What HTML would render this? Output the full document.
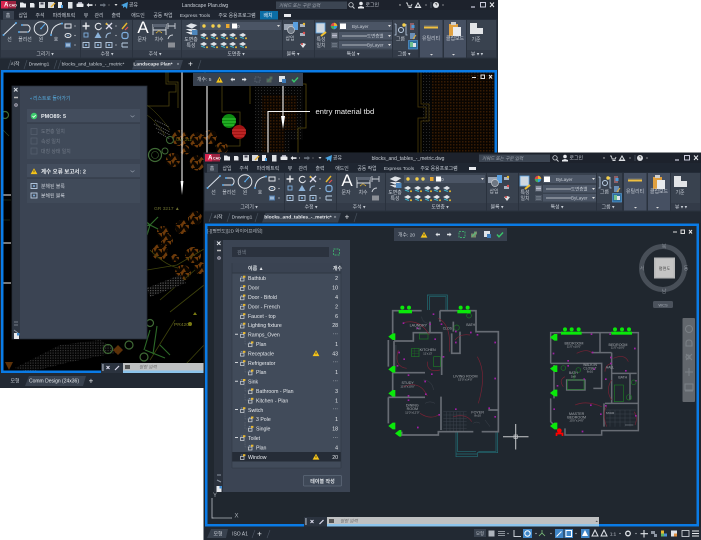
<!DOCTYPE html>
<html><head><meta charset="utf-8"><style>
html,body{margin:0;padding:0;background:#fff;width:701px;height:540px;overflow:hidden}
svg{display:block}
text{font-family:"Liberation Sans","Noto Sans CJK KR",sans-serif;font-size:4.9px;fill:#c8ced6}
.m{text-anchor:middle}.e{text-anchor:end}
.b{font-weight:bold;fill:#e4e8ec}
.w{fill:#e6e9ed;font-size:5.2px}
.d{fill:#737c89}
.t{font-size:4px;fill:#a9adb2;text-anchor:middle}
.i{fill:none;stroke:#dfe3e8;stroke-width:1}
</style></head><body>
<svg width="701" height="540" viewBox="0 0 701 540" xmlns="http://www.w3.org/2000/svg">
<defs>
<pattern id="dotO" width="3" height="3" patternUnits="userSpaceOnUse"><rect width="3" height="3" fill="#0a0501"/><rect width="1.500" height="1.500" fill="#361b04"/></pattern>
<pattern id="dotG" width="3" height="3" patternUnits="userSpaceOnUse"><rect width="3" height="3" fill="#050505"/><rect width="1" height="1" fill="#2a2a2a"/></pattern>
<pattern id="dotL" width="2.500" height="2.500" patternUnits="userSpaceOnUse"><rect width="2.500" height="2.500" fill="#080808"/><rect width="1.200" height="1.200" fill="#565656"/></pattern>
<pattern id="tri" width="9" height="8" patternUnits="userSpaceOnUse"><rect width="9" height="8" fill="#0a0500"/><path d="M0 0H4L2 4ZM5 1H9V5ZM1 8L4 4 6 8Z" fill="#6f3b0a"/></pattern>
<g id="warn"><path d="M0-3.200L3.400 2.600H-3.400Z" fill="#f6c51a"/><path d="M-.35-1.200h.7v2h-.7z" fill="#222"/></g>
<g id="blk"><rect x="-2.500" y="-.5" width="3.500" height="3" fill="none" stroke="#d6dade" stroke-width=".7"/><rect x="0" y="-2.800" width="2.400" height="2" fill="#e8b830"/><path d="M-2.200-2H-.5" stroke="#9fb8d8" stroke-width=".6"/></g>
<g id="lay"><path d="M-4-1L0-3 3-1 0 1Z" fill="#dfe3e8"/><path d="M-3 1L1 2.500" stroke="#3db3c9" stroke-width="1.200"/><circle cx="3" cy="2.200" r="1" fill="#e8b830"/></g>
<g id="sm"><rect x="-3" y="-2.500" width="6" height="5" fill="none" stroke="#bcd0e6" stroke-width=".9"/><circle r="1" fill="#7fb0e0"/></g>
<g id="chrome">
 <rect x="0" y="0" width="497.500" height="19.500" fill="#1f2631"/>
 <rect x="0" y="0" width="497.500" height="10" fill="#1d222c"/>
 <rect x="1" y="1" width="7" height="7.500" fill="#d8254f"/><rect x="8" y="1" width="8" height="7.500" fill="#9a2340"/>
 <path d="M20 2.500h3l1 1h2v4h-6z" fill="#e8eaee"/>
 <path d="M30 3h3.500l1 1v3.500h-4.500z" fill="#e8eaee"/><rect x="39" y="2" width="6" height="6" fill="#d5d8dc"/><rect x="40.500" y="2.500" width="3" height="2" fill="#445"/><rect x="48" y="2" width="6" height="6" fill="#d5d8dc"/><path d="M51 7L55 3" stroke="#e9b030" stroke-width="1.300"/><rect x="58" y="2" width="4" height="6" fill="#e8eaee"/><rect x="61" y="5" width="2" height="3" fill="#4ea0e0"/><rect x="68" y="2" width="4.500" height="6.500" fill="#dfe2e6"/><rect x="76.500" y="3.500" width="7" height="3.500" rx=".8" fill="#e8eaee"/><rect x="78" y="2" width="4" height="1.500" fill="#aab"/>
 <path d="M86.500 5l2.500-2v1.300h3.500v1.600h-3.500v1.300z" fill="#e8eaee"/><circle cx="95.500" cy="5" r=".6" fill="#bbb"/><path d="M106 5l-2.500-2v1.300h-3.500v1.600h3.500v1.300z" fill="#6c7480"/><circle cx="109" cy="5" r=".6" fill="#888"/><path d="M114.500 4h3l-1.500 2z" fill="#ddd"/>
 <path d="M121 5l7-3-1 7-2-2.500-2 1.500v-2z" fill="#4aa3e0"/>
 <path d="M352.500 6.500l2 2" stroke="#cfd3d8"/><circle cx="351" cy="4.800" r="2.200" fill="none" stroke="#cfd3d8" stroke-width=".8"/>
 <circle cx="361" cy="3.500" r="1.800" fill="#e8eaee"/><path d="M358 8.500v-1.500l3-1 3 1v1.500z" fill="#e8eaee"/>
 <circle cx="400" cy="5" r=".7" fill="#ccc"/><path d="M406 3h1.200l1 3h3l.8-2M408.500 7.500h3" fill="none" stroke="#d5d8dc" stroke-width=".9"/>
 <path d="M418 2l3.500 6h-7zM418 4l-1.500 2.500h3z" fill="#dfe2e6" fill-rule="evenodd"/><circle cx="426" cy="5" r=".6" fill="#ccc"/><path d="M431 2v6" stroke="#444c58"/>
 <circle cx="436" cy="5" r="3" fill="#dfe2e6"/><path d="M435 4.200q1-1.200 2 0-.2.800-1 1" stroke="#333" stroke-width=".6" fill="none"/><circle cx="443" cy="5" r=".6" fill="#ccc"/>
 <path d="M471 7h4" stroke="#dde" stroke-width="1.100"/><rect x="480.500" y="2.500" width="5" height="4.500" fill="none" stroke="#dde" stroke-width=".9"/><path d="M490 2.500l4 4.500M494 2.500l-4 4.500" stroke="#e8eaee" stroke-width="1"/>
</g>
<g id="rib">
 <rect x="0" y="19.500" width="497.500" height="39" fill="#2a323e"/>
 <g fill="#39424f">
  <rect x="1" y="20" width="79" height="30"/><rect x="81" y="20" width="51" height="30"/><rect x="133" y="20" width="48" height="30"/><rect x="182" y="20" width="100" height="30"/><rect x="283" y="20" width="31" height="30"/><rect x="315" y="20" width="77" height="30"/><rect x="393" y="20" width="25" height="30"/><rect x="467" y="20" width="29" height="30"/>
 </g>
 <g fill="#333b48"><rect x="1" y="50" width="79" height="7.500"/><rect x="81" y="50" width="51" height="7.500"/><rect x="133" y="50" width="48" height="7.500"/><rect x="182" y="50" width="100" height="7.500"/><rect x="283" y="50" width="31" height="7.500"/><rect x="315" y="50" width="77" height="7.500"/><rect x="393" y="50" width="25" height="7.500"/><rect x="467" y="50" width="29" height="7.500"/></g>
 <rect x="420" y="20" width="22.500" height="37.500" fill="#465062"/><rect x="444" y="20" width="22" height="37.500" fill="#465062"/>
 <path d="M3.500 35L16 23" stroke="#d8e0ea" stroke-width="1"/><circle cx="3.500" cy="35" r="1" fill="#5aa8e8"/><circle cx="16" cy="23" r="1" fill="#5aa8e8"/>
 <path d="M19 32H28A4 4 0 0 0 28 25H22" class="i" stroke-width="1"/><circle cx="19" cy="32" r="1" fill="#5aa8e8"/><circle cx="22" cy="25" r="1" fill="#5aa8e8"/><circle cx="28" cy="32" r=".8" fill="#5aa8e8"/>
 <circle cx="41" cy="28.500" r="6.800" class="i"/><path d="M41 28.500L45 24" stroke="#5aa8e8"/><circle cx="41" cy="28.500" r=".9" fill="#5aa8e8"/>
 <path d="M51 35Q52 25 62 23.500" class="i"/><circle cx="51" cy="35" r="1" fill="#5aa8e8"/><circle cx="62" cy="23.500" r="1" fill="#5aa8e8"/>
 <rect x="65" y="24" width="6" height="4" class="i" stroke="#bcd0e6"/><ellipse cx="68" cy="35.500" rx="3" ry="2" class="i"/><circle cx="68" cy="35.500" r=".7" fill="#7fb0e0"/><rect x="65" y="42.500" width="6" height="5" fill="#4f79a8"/><rect x="66" y="43.500" width="4" height="3" fill="#9db9d6"/>
 <g fill="#d5d9de"><circle cx="75" cy="26" r=".6"/><circle cx="75" cy="35.500" r=".6"/><circle cx="75" cy="45" r=".6"/><circle cx="116" cy="35.500" r=".6"/><circle cx="116" cy="26" r=".6"/><circle cx="116" cy="45" r=".6"/></g>
 <path d="M86 22.500v7M82.500 26h7" stroke="#e8eaee" stroke-width="1.400"/>
 <path d="M101 24.500a3.200 3.200 0 1 0 .5 3" fill="none" stroke="#e0e3e8" stroke-width="1.100"/>
 <path d="M106 23l6 6M112 23l-6 6" stroke="#dde" stroke-width="1.300"/><circle cx="106.500" cy="24" r="1" fill="#e8b830"/>
 <path d="M122 29l5-6" stroke="#e8b830" stroke-width="1.400"/><path d="M125 30l3-3" stroke="#e05050" stroke-width="1.200"/>
 <rect x="84" y="33" width="4" height="4" fill="none" stroke="#7fb0e0" stroke-width=".9"/>
 <path d="M98 32l3.500 6h-7z" fill="#8bb2d9"/><path d="M106 38q0-5 5-5" fill="none" stroke="#9cb9d8" stroke-width="1.100"/><rect x="122" y="32.500" width="6" height="6" rx="2" fill="none" stroke="#7fb0e0" stroke-width="1.200"/>
 <use href="#sm" x="86" y="45"/><use href="#sm" x="98" y="45"/><use href="#sm" x="109" y="45"/><path d="M122 43h6M122 47h6M122 43v4" fill="none" stroke="#bcd0e6" stroke-width=".9"/>
 <path d="M153 24v11M166 24v11M153 30h13" stroke="#d8dce2" stroke-width=".9" fill="none"/><rect x="153" y="24" width="13" height="3" fill="#5a6372"/><path d="M156 33l3-2 3 2" stroke="#e8b830" fill="none" stroke-dasharray="1 .5"/>
 <path d="M168 23v6M175 23v6M168 26h7" stroke="#c9ced5" stroke-width=".9"/><path d="M168 39q1-4 5-4" stroke="#c9ced5" fill="none"/><rect x="168" y="42.500" width="7" height="5" fill="#8b8f96"/>
 <path d="M185 26l6-3 7 2-6 4zM185 29l6 3 7-3M185 32l6 3 7-3" fill="#dfe3e8" stroke="#39424f" stroke-width=".6"/><rect x="192" y="30" width="5.500" height="5" fill="#4e87bd"/>
 <rect x="200" y="22" width="81" height="8" fill="#4b5565"/><circle cx="204" cy="26" r="1.700" fill="#f6d04a"/><circle cx="213" cy="26" r="1.700" fill="#f6d04a"/><circle cx="219" cy="26" r="1.700" fill="#e8d060"/><rect x="226" y="24" width="3.500" height="4" fill="#e8a830"/><rect x="232" y="23.500" width="5" height="5" fill="#fff"/><path d="M277 25h3l-1.500 2z" fill="#ddd"/>
 <use href="#lay" x="204" y="36"/><use href="#lay" x="214" y="36"/><use href="#lay" x="224" y="36"/><use href="#lay" x="233" y="36"/><use href="#lay" x="243" y="36"/>
 <use href="#lay" x="204" y="45"/><use href="#lay" x="214" y="45"/><use href="#lay" x="224" y="45"/><use href="#lay" x="233" y="45"/><use href="#lay" x="243" y="45"/>
 <rect x="284" y="24" width="10" height="6" fill="#9aa4b2"/><rect x="293" y="22" width="5" height="8" fill="#5aa0e0"/><circle cx="291" cy="30" r="3.500" fill="#6f7884" stroke="#c5c9cf" stroke-width=".7"/>
 <path d="M300 24h5v3h-5zM300 33h5v3h-5z" fill="#aab3c0"/><circle cx="304" cy="24" r="1.200" fill="#e8b830"/><circle cx="304" cy="33" r="1.200" fill="#e05050"/><path d="M300 44l3-1 3 1-3 4z" fill="#e0e3e6"/><circle cx="302" cy="44" r="1" fill="#d04040"/>
 <rect x="316" y="23" width="9" height="10" fill="#cfd8e0" stroke="#5aa0e0" stroke-width=".8"/><path d="M321 36l5-4" stroke="#f0c030" stroke-width="2"/>
 <circle cx="334" cy="26" r="3.200" fill="#e04848"/><path d="M334 26V22.800A3.200 3.200 0 0 1 337.200 26Z" fill="#e8b030"/><path d="M334 26H337.200A3.200 3.200 0 0 1 334 29.200Z" fill="#30a0e0"/><path d="M334 26V29.200A3.200 3.200 0 0 1 330.800 26Z" fill="#40b060"/>
 <rect x="339" y="22" width="53" height="8" fill="#4b5565"/><rect x="340" y="23.500" width="6" height="5.500" fill="#fff"/><path d="M388 25h3l-1.500 2z" fill="#ddd"/>
 <rect x="331" y="32.500" width="7" height="6" fill="#59626f"/><path d="M332 34h5M332 35.500h5M332 37h5" stroke="#dde"  stroke-width=".7"/>
 <rect x="331" y="42" width="7" height="6" fill="#4a5361"/><path d="M332 43.500h5M332 45h5M332 46.500h5" stroke="#8c95a2" stroke-width=".6"/>
 <rect x="339" y="32" width="53" height="7.500" fill="#4b5565"/><rect x="339" y="41" width="53" height="7.500" fill="#4b5565"/><path d="M342 36h25M342 45h25" stroke="#b0b6be" stroke-width="1"/><path d="M388 35h3l-1.500 2zM388 44h3l-1.500 2z" fill="#ddd"/>
 <path d="M396 24v11h-1.500M396 24h-1.500M406 24v11h1.500" stroke="#bcd0e6" fill="none" stroke-width=".8"/><circle cx="401" cy="30" r="2.500" fill="none" stroke="#bcd0e6"/><circle cx="404" cy="25" r="1.700" fill="#f6d04a"/>
 <path d="M410 23h4v7h-4z" fill="#8e6068"/><rect x="411.500" y="25" width="3" height="3" fill="#4d9ad8"/><path d="M410 33h5v6h-5z" fill="#6b8fb5"/><path d="M413 39l3-4" stroke="#e8b030"/><rect x="408.500" y="40.500" width="9" height="8.500" fill="#2d6e9e" stroke="#5aa0e0" stroke-width=".6"/><rect x="410" y="42" width="3" height="5" fill="#70c090"/><rect x="413" y="43" width="3" height="4" fill="#dfe3e8"/>
 <rect x="424" y="26.500" width="14" height="2" fill="#f0c040"/><rect x="424" y="25.500" width="14" height=".6" fill="#777"/>
 <rect x="449" y="24" width="9" height="12" fill="#e0a040"/><rect x="451" y="22" width="5" height="3" fill="#cfcfcf"/><rect x="453" y="27" width="8" height="9" fill="#e8eaee"/>
 <path d="M470 23h7v5h6v6h-13z" fill="#e3e5e8"/>
 <path d="M430 54h3l-1.500 1.500zM452 54h3l-1.500 1.500z" fill="#ddd"/>
</g>
<g id="tool"><rect width="110" height="13" fill="#38414f"/></g>
<g id="tic"><path d="M-1.500 0l2-2v1.200h2.500v1.600h-2.500v1.200z" fill="#dfe3e8" /></g>
<g id="chk"><path d="M-3 0l2 2.300 4-4.300" fill="none" stroke="#39c66a" stroke-width="1.400"/></g>
<g id="back"><rect x="-3" y="-3" width="6" height="6" fill="none" stroke="#3ea86a" stroke-width=".9" stroke-dasharray="2 1"/></g>
<g id="gbl"><path d="M-3-1h5v4h-5zM0-3h3v3h-3z" fill="#7a8a6a"/><path d="M-2 2l4-4" stroke="#54c080"/></g>
</defs>

<rect width="701" height="540" fill="#fff"/>

<!-- WINDOW 1 -->
<rect x="0" y="0" width="498" height="388" fill="#20272f"/>
<use href="#chrome"/>
<rect x="3" y="11" width="11" height="8.500" fill="#39424f"/>
<rect x="260" y="11" width="18" height="8.500" fill="#0b6ea6"/>
<rect x="284" y="14" width="7" height="3" fill="#e8eaee"/>
<use href="#rib"/>
<text x="4" y="6.300" style="font-size:6.200px;fill:#fff;font-weight:bold">A</text><text x="9" y="6.300" style="font-size:3.600px;fill:#fff;font-weight:bold">CAD</text>
<text x="129" y="6.700">공유</text><text x="205" y="6.800" class="m" style="font-size:5px">Landscape Plan.dwg</text>
<rect x="276" y="1.500" width="71" height="7.500" fill="#3c4552"/><text x="279" y="6.800" style="font-style:italic;font-size:4.500px;fill:#a6adb7">키워드 또는 구문 입력</text><text x="365.500" y="6.700">로그인</text>
<text x="8" y="17.200" class="m">홈</text><text x="23" y="17.200" class="m">삽입</text><text x="40" y="17.200" class="m">주석</text><text x="64" y="17.200" class="m">파라메트릭</text><text x="86" y="17.200" class="m">뷰</text><text x="99" y="17.200" class="m">관리</text><text x="116" y="17.200" class="m">출력</text><text x="138" y="17.200" class="m">애드인</text><text x="163" y="17.200" class="m">공동 작업</text><text x="195" y="17.200" class="m">Express Tools</text><text x="237" y="17.200" class="m">주요 응용프로그램</text><text x="268" y="17.200" class="m" style="fill:#e8eef5">배치</text>
<g><text x="9.500" y="41" class="m">선</text><text x="25" y="41" class="m">폴리선</text><text x="41" y="41" class="m">원</text><text x="56" y="41" class="m">호</text><text x="143" y="33" class="m" style="font-size:17px;fill:#fff;font-family:'Liberation Sans',sans-serif">A</text><text x="142" y="41" class="m">문자</text><text x="159" y="41" class="m">치수</text><text x="191" y="41" class="m">도면층</text><text x="191" y="47" class="m">특성</text><text x="290" y="40" class="m">삽입</text><text x="321" y="41" class="m">특성</text><text x="321" y="47" class="m">일치</text><text x="400.500" y="40.500" class="m">그룹</text><text x="431" y="40" class="m">유틸리티</text><text x="455" y="40" class="m">클립보드</text><text x="476" y="41" class="m">기준</text>
<text x="237" y="27.800">0</text><text x="352" y="27.800" style="font-size:4.500px">ByLayer</text><text x="367" y="37.500" style="font-size:4.500px">도면층별</text><text x="367" y="46.500" style="font-size:4.500px">ByLayer</text>
<text x="45" y="55.500" class="m">그리기 ▾</text><text x="107" y="55.500" class="m">수정 ▾</text><text x="155" y="55.500" class="m">주석 ▾</text><text x="236" y="55.500" class="m">도면층 ▾</text><text x="293" y="55.500" class="m">블록 ▾</text><text x="353" y="55.500" class="m">특성 ▾</text><text x="404" y="55.500" class="m">그룹 ▾</text><text x="477" y="55.500" class="m">뷰 ▾ ▾</text></g>
<rect x="0" y="58.500" width="497.500" height="11.500" fill="#222933"/>
<path d="M132 69.500L135.500 60H183L180 69.500Z" fill="#39424f"/>
<text x="15" y="65.500" class="m">시작</text><text x="39" y="65.500" class="m">Drawing1</text><text x="93" y="65.500" class="m">blocks_and_tables_-_metric*</text><text x="153" y="65.500" class="m" style="font-weight:bold;fill:#e8ebef">Landscape Plan*</text><text x="178" y="65.500" class="m">×</text><text x="190.500" y="66.500" class="m" style="font-size:8px;fill:#e8ebef">+</text>
<path d="M8 69L11 60M24 69L27 60M54 69L57 60M58 69l3-9M198 69l3-9" stroke="#4a5361" stroke-width=".6"/>

<!-- viewport 1 -->
<rect x="3" y="72" width="492" height="300" fill="#000"/>
<rect x="432" y="72" width="63" height="90" fill="url(#dotO)"/>
<rect x="423" y="72" width="9" height="90" fill="url(#dotG)"/>
<path d="M418 72V107H426V118H418V153M421 72V104H429V121H421V153" stroke="#4d3c09" stroke-width=".8" fill="none"/>
<path d="M255 87H303V140H290V153H255Z" fill="url(#dotG)"/><path d="M262 95H297V130H285V153H262Z" fill="url(#dotO)"/><path d="M250 84H306V128H298V153M250 84V104" stroke="#5a4c0d" fill="none" stroke-width=".8"/>
<path d="M166 72V84H176V92H169V106H147M168 72V82H178V108M205 72V82H222V112H240V146H215" stroke="#4f4610" fill="none" stroke-width=".8"/>
<path d="M147 105Q160 115 170 130M147 115Q155 120 165 135" stroke="#5a5912" fill="none" stroke-width=".5"/>
<path d="M154 124l16 8M156 128l14 7M158 132l12 7M155 120l14 7" stroke="#777" stroke-dasharray="1 1" stroke-width=".8"/>
<g fill="url(#tri)">
<circle cx="180" cy="138" r="8"/><circle cx="197" cy="140" r="7.500"/><circle cx="173" cy="160" r="7"/><circle cx="197" cy="163" r="7.500"/><circle cx="185" cy="150" r="5"/><circle cx="210" cy="137" r="7"/><circle cx="222" cy="148" r="6"/>
<circle cx="182" cy="227" r="7"/><circle cx="195" cy="218" r="7"/><circle cx="163" cy="232" r="6"/><circle cx="160" cy="252" r="8"/><circle cx="167" cy="240" r="6"/><circle cx="183" cy="273" r="8"/><circle cx="193" cy="255" r="8"/><circle cx="200" cy="268" r="6"/><circle cx="175" cy="258" r="4"/>
</g>
<path d="M150 250q15 15 28 18M147 270l30-5 27-16M160 300L195 270M170 312L204 285M150 360L175 320M185 365L204 345" stroke="#3f430c" fill="none" stroke-width=".8"/>
<path d="M147 288L180 275 186 283 150 297Z" fill="url(#dotL)"/>
<path d="M15 368L60 345 100 340 120 352 70 362 30 372Z" fill="url(#dotL)" opacity=".6"/>
<g fill="none" stroke="#3f6a35"><circle cx="155" cy="155" r="6.500" stroke-width="1.200"/><circle cx="155" cy="155" r="3.500" stroke-width=".6"/><circle cx="170" cy="140" r="3.500"/><circle cx="165" cy="151" r="3"/><circle cx="108" cy="349" r="4.500" stroke-width="1.200"/><circle cx="129" cy="345" r="4" stroke-width="1.200"/><circle cx="144" cy="357" r="4" stroke-width="1.200"/><circle cx="150" cy="323" r="3.500" stroke-width="1.200"/><circle cx="5" cy="115" r="3.500" stroke-width="1.200"/></g>
<path d="M150 225l-8-7M150 225l8-8M150 225l-3 10M150 225l8 4M150 225l-10 2" stroke="#2f6a2a" stroke-width="1.200"/>
<path d="M150 330l-6 20M157 326l-4 28M145 350l20 8M160 345l10 10" stroke="#2c6a28" stroke-width="1.100"/>
<path d="M118 345l5 5-5 5-5-5zM5 362h8l-4 8z" fill="#5c3108"/>
<text x="154" y="210" style="fill:#6d7030">GR 3217 ▲</text><text x="174" y="326" style="fill:#7d7d26">PR4209</text><text x="176" y="141" style="fill:#6a6a10;font-size:4.500px">UW 211</text>
<circle cx="190" cy="324" r="2" fill="#7a7a12"/><path d="M195 312l-2 3h4z" fill="#7a7a12"/>
<path d="M3 195H11M3 243H11M3 283H11" stroke="#eee" stroke-width=".9"/>
<path d="M3 130l6 6M3 200H11M3 220H10" stroke="#2f4a28" stroke-width=".6"/>
<path d="M182 72V184" stroke="#f2f2f2" stroke-width="1.100"/><path d="M180.600 181L182 195 183.400 181Z" fill="#fff"/>
<path d="M207 86V154M268 154V111.500H310M283 86V118" stroke="#f2f2f2" stroke-width="1.100" fill="none"/><path d="M281 116L283 129 285 116Z" fill="#fff"/>
<text x="315.500" y="114" style="font-size:7.600px;fill:#eee;font-family:'Liberation Sans',sans-serif">entry material tbd</text>
<circle cx="229" cy="121" r="7" fill="#0e8a12" /><path d="M222 119h14M222 122h14M224 125h10" stroke="#41e340" stroke-width=".8"/>
<circle cx="239" cy="132" r="7" fill="#a01414"/><path d="M232 130h14M232 133h14M234 136h10" stroke="#e84040" stroke-width=".8"/>
<path d="M472 77.500h4" stroke="#ddd" stroke-width="1"/><rect x="481" y="75" width="3.500" height="3.500" fill="none" stroke="#ddd"/><path d="M489 75l3 3.500M492 75l-3 3.500" stroke="#eee"/>

<!-- toolbar 1 -->
<use href="#tool" x="193" y="73"/>
<text x="197" y="81">개수: 5</text><use href="#warn" x="219.500" y="80"/><use href="#tic" x="232" y="79.500"/><use href="#tic" transform="translate(245 79.500) scale(-1 1)"/><rect x="255" y="77" width="5" height="5" fill="none" stroke="#5a6370" stroke-dasharray="1.500 1"/><use href="#gbl" x="269.500" y="79.500" opacity=".5"/><rect x="279" y="76" width="6" height="6" fill="#dfe3e8"/><rect x="282" y="79" width="4" height="4" fill="#3d7ab8"/><use href="#chk" x="295" y="79.500"/>

<!-- panel 1 -->
<rect x="12" y="86" width="8.500" height="253" fill="#2f3743"/><rect x="20" y="86" width="127" height="253" fill="#3b4453"/>
<path d="M12 86h135v253h-135z" fill="none" stroke="#262d37" stroke-width=".8"/>
<path d="M14 88l3.500 3.500M17.500 88l-3.500 3.500" stroke="#dfe3e8"/><path d="M14 97.500h4" stroke="#bbb" stroke-width="1.500"/><circle cx="16" cy="105" r="1.800" fill="#aab" /><circle cx="16" cy="105" r=".7" fill="#333"/>
<path d="M14 322h4M14 325h4M14 330l4 3" stroke="#8c95a2" stroke-width=".8"/><rect x="14" y="333" width="5" height="6" fill="#e8eaee"/><rect x="17" y="333" width="2.500" height="2.500" fill="#3d8ad0"/>
<path d="M30 98.500l1.500-1v2z" fill="#3ea5e0"/><text x="33" y="99.800" style="fill:#59b2e6">리스트로 돌아가기</text>
<rect x="27" y="109" width="113" height="14" fill="#434d5d"/><rect x="27" y="123" width="113" height="36" fill="#404a59"/><path d="M27 123h113" stroke="#2f3743"/>
<circle cx="34" cy="116" r="3.200" fill="#3ecb6e"/><path d="M32.500 116l1.200 1.300 2-2.300" stroke="#fff" fill="none" stroke-width=".8"/><text x="41" y="118.200" class="b" style="font-size:5.500px">PMO89: 5</text><path d="M130.500 115.500l2 1.500 2-1.500" stroke="#8c95a2" fill="none" stroke-width=".7"/>
<g fill="none" stroke="#576171" stroke-width=".7"><rect x="31" y="128.500" width="6" height="6"/><rect x="31" y="138" width="6" height="6"/><rect x="31" y="148" width="6" height="6"/></g>
<text x="41" y="133.200" class="d">도면층 일치</text><text x="41" y="143" class="d">속성 일치</text><text x="41" y="152.800" class="d">대칭 상태 일치</text>
<rect x="27" y="164" width="113" height="14" fill="#434d5d"/><rect x="27" y="178" width="113" height="25" fill="#404a59"/><path d="M27 178h113" stroke="#2f3743"/>
<use href="#warn" x="34" y="171.500"/><text x="41" y="173.500" class="b" style="font-size:5.500px">계수 오류 보고서: 2</text><path d="M130.500 170.500l2 1.500 2-1.500" stroke="#8c95a2" fill="none" stroke-width=".7"/>
<use href="#sm" x="34" y="186"/><use href="#sm" x="34" y="195.500"/><text x="41" y="187.800">분해된 블록</text><text x="41" y="197.300">분해된 블록</text>

<!-- bottom 1 -->
<rect x="3" y="370.500" width="98" height="2.500" fill="#0a7be6"/><rect x="1" y="70" width="2.500" height="303" fill="#0a7be6"/>
<rect x="1" y="70" width="496" height="2.500" fill="#0a7be6"/><rect x="494.500" y="70" width="2.500" height="84" fill="#0a7be6"/>
<rect x="101" y="363" width="22" height="10" fill="#2b333f"/><rect x="102" y="364" width="1.800" height="7" fill="#7c8490"/><path d="M106.500 366l3 3M109.500 366l-3 3" stroke="#dde"/><path d="M115 370l4-4" stroke="#dde" stroke-width="1.200"/>
<rect x="123" y="363" width="81" height="7.500" fill="#bfc1c2"/><rect x="123" y="370.500" width="81" height="2.500" fill="#8cc4ec"/><rect x="125" y="365" width="5" height="4" fill="#555"/><text x="139" y="368.500" style="font-size:4.500px;fill:#6d6d6d;font-style:italic">명령 입력</text>
<rect x="0" y="373" width="204" height="14.500" fill="#222933"/>
<path d="M25 386l4-10H86l-3 10Z" fill="#39424f"/><text x="15" y="382.500" class="m">모형</text><text x="54" y="382.500" class="m" style="fill:#e8ebef;font-size:5px">Comm Design (24x36)</text><text x="91" y="383.500" class="m" style="font-size:8px;fill:#e8ebef">+</text>

<!-- WINDOW 2 -->
<rect x="203.500" y="152.500" width="497.500" height="387.500" fill="#20272f"/>
<g transform="translate(204 153)">
<use href="#chrome"/>
<rect x="3" y="11" width="11" height="8.500" fill="#39424f"/>
<rect x="265" y="14" width="7" height="3" fill="#e8eaee"/>
<use href="#rib"/>
<text x="4" y="6.300" style="font-size:6.200px;fill:#fff;font-weight:bold">A</text><text x="9" y="6.300" style="font-size:3.600px;fill:#fff;font-weight:bold">CAD</text>
<text x="129" y="6.700">공유</text><text x="204" y="6.800" class="m" style="font-size:5px">blocks_and_tables_-_metric.dwg</text>
<rect x="275" y="1.500" width="71" height="7.500" fill="#3c4552"/><text x="278" y="6.800" style="font-style:italic;font-size:4.500px;fill:#a6adb7">키워드 또는 구문 입력</text><text x="365.500" y="6.700">로그인</text>
<text x="8" y="17.200" class="m">홈</text><text x="23" y="17.200" class="m">삽입</text><text x="40" y="17.200" class="m">주석</text><text x="64" y="17.200" class="m">파라메트릭</text><text x="86" y="17.200" class="m">뷰</text><text x="99" y="17.200" class="m">관리</text><text x="116" y="17.200" class="m">출력</text><text x="138" y="17.200" class="m">애드인</text><text x="163" y="17.200" class="m">공동 작업</text><text x="195" y="17.200" class="m">Express Tools</text><text x="235" y="17.200" class="m">주요 응용프로그램</text>
<text x="9.500" y="41" class="m">선</text><text x="25" y="41" class="m">폴리선</text><text x="41" y="41" class="m">원</text><text x="56" y="41" class="m">호</text><text x="143" y="33" class="m" style="font-size:17px;fill:#fff;font-family:'Liberation Sans',sans-serif">A</text><text x="142" y="41" class="m">문자</text><text x="159" y="41" class="m">치수</text><text x="191" y="41" class="m">도면층</text><text x="191" y="47" class="m">특성</text><text x="290" y="40" class="m">삽입</text><text x="321" y="41" class="m">특성</text><text x="321" y="47" class="m">일치</text><text x="400.500" y="40.500" class="m">그룹</text><text x="431" y="40" class="m">유틸리티</text><text x="455" y="40" class="m">클립보드</text><text x="476" y="41" class="m">기준</text>
<text x="237" y="27.800">0</text><text x="352" y="27.800" style="font-size:4.500px">ByLayer</text><text x="367" y="37.500" style="font-size:4.500px">도면층별</text><text x="367" y="46.500" style="font-size:4.500px">ByLayer</text>
<text x="45" y="55.500" class="m">그리기 ▾</text><text x="107" y="55.500" class="m">수정 ▾</text><text x="155" y="55.500" class="m">주석 ▾</text><text x="236" y="55.500" class="m">도면층 ▾</text><text x="293" y="55.500" class="m">블록 ▾</text><text x="353" y="55.500" class="m">특성 ▾</text><text x="404" y="55.500" class="m">그룹 ▾</text><text x="477" y="55.500" class="m">뷰 ▾ ▾</text>
<rect x="0" y="58.500" width="497" height="11.500" fill="#222933"/>
<path d="M58 69.500L61.500 60H137L134 69.500Z" fill="#39424f"/>
<text x="14" y="65.500" class="m">시작</text><text x="38" y="65.500" class="m">Drawing1</text><text x="94" y="65.500" class="m" style="font-weight:bold;fill:#e8ebef;font-size:4.900px">blocks_and_tables_-_metric*</text><text x="131" y="65.500" class="m">×</text><text x="143" y="66.500" class="m" style="font-size:8px;fill:#e8ebef">+</text>
<path d="M5 69L8 60M23 69L26 60M51 69L54 60M150 69l3-9" stroke="#4a5361" stroke-width=".6"/>
</g>
<rect x="205" y="223" width="494" height="303" fill="#20272f"/>
<text x="207" y="232.500" style="fill:#b4bac2;font-size:4.700px">[-][평면도][2D 와이어프레임]</text>

<!-- Plan 1 -->
<g transform="translate(370 290) scale(.33333)">
<path d="M172 60V15H232V60M178 60V20H228V60M258 425V500H322V488H383V425M262 425V484H318M258 492H322M325 484H378V425" fill="none" stroke="#227078" stroke-width="2"/>
<g fill="none" stroke="#3c434c" stroke-width="1.500"><path d="M220 365H290M220 375H290M220 385H290M220 395H290M220 405H290M220 415H290M230 365V425M240 365V425M250 365V425M260 365V425M270 365V425M280 365V425"/><path d="M75 165V235M78 165V240M160 270a30 30 0 0 1 30 30M165 340a30 30 0 0 1 30 0M155 80a20 20 0 0 0 20 20M345 390l15 20M310 400a15 15 0 0 1 20 0"/></g>
<path d="M68 130V62H155M210 62H318V125H385V425H335M310 425H205V435H95V425M55 150V230M55 322V400M72 153H130V128H215V255M68 248H165M68 248V320M55 322H165M213 320V420M270 125V190H245V130M180 95V128M250 95V125M355 360H385M210 62V95M72 153V235" fill="none" stroke="#676c74" stroke-width="5"/>
<path d="M100 98Q150 85 178 135M205 85Q245 105 238 185M322 200Q352 250 325 340M100 290Q150 270 172 318M85 180Q70 230 110 235M172 215Q170 250 210 240M150 370Q180 390 205 375M250 380Q290 370 305 395M255 150Q270 130 300 135" fill="none" stroke="#7a2234" stroke-width="2"/>
<path d="M98 97h5v5h-5zM178 100h5v5h-5zM212 100h5v5h-5zM188 70h5v5h-5zM320 132h5v5h-5zM373 155h5v5h-5zM373 263h5v5h-5zM373 378h5v5h-5zM355 352h5v5h-5zM255 355h5v5h-5zM205 372h5v5h-5zM141 410h5v5h-5zM113 315h5v5h-5zM113 328h5v5h-5zM113 253h5v5h-5zM80 225h5v5h-5zM100 205h5v5h-5zM85 185h5v5h-5zM163 272h5v5h-5zM183 250h5v5h-5zM218 198h5v5h-5zM193 145h5v5h-5zM140 112h5v5h-5zM255 122h5v5h-5zM255 155h5v5h-5zM165 310h5v5h-5zM300 125h5v5h-5z" fill="#a01fa5"/>
<path d="M125 175h22v25h-22z" fill="none" stroke="#1c7a24" stroke-width="2"/><path d="M125 183h22M125 191h22M133 175v25" stroke="#1c7a24"/><rect x="148" y="132" width="26" height="15" fill="none" stroke="#1c7a24" stroke-width="2"/><rect x="191" y="200" width="20" height="30" fill="none" stroke="#1c7a24" stroke-width="2"/><circle cx="260" cy="113" r="8" fill="none" stroke="#1c7a24" stroke-width="2"/><circle cx="297" cy="77" r="7" fill="none" stroke="#1c7a24" stroke-width="2"/>
<g fill="#0ae80a"><circle cx="97" cy="53" r="6"/><circle cx="117" cy="53" r="6"/><rect x="86" y="60" width="40" height="10"/><circle cx="272" cy="53" r="6"/><circle cx="293" cy="53" r="6"/><rect x="262" y="60" width="40" height="10"/><path d="M55 140L68 130H76V150H68ZM55 238L68 228H76V248H68ZM55 310L68 300H76V320H68ZM55 408L68 398H76V418H68ZM75 430L88 420H94V440H88Z"/></g>
<text x="145" y="109" class="t" style="font-size:11px">LAUNDRY</text><text x="145" y="119" class="t" style="font-size:9px">7x8</text><text x="173" y="183" class="t" style="font-size:11px">KITCHEN</text><text x="173" y="193" class="t" style="font-size:9px">11'x13'</text><text x="286" y="263" class="t" style="font-size:11px">LIVING ROOM</text><text x="286" y="272" class="t" style="font-size:9px">15'0"x14'0"</text><text x="113" y="282" class="t" style="font-size:11px">STUDY</text><text x="113" y="292" class="t" style="font-size:9px">11'0"x10'0"</text><text x="127" y="350" class="t" style="font-size:11px">DINING</text><text x="127" y="360" class="t" style="font-size:11px">ROOM</text><text x="127" y="371" class="t" style="font-size:9px">11'0"x12'0"</text><text x="323" y="370" class="t" style="font-size:11px">FOYER</text><text x="323" y="380" class="t" style="font-size:9px">8x10</text><text x="302" y="108" class="t" style="font-size:10px">BATH</text><text x="232" y="118" class="t" style="font-size:10px">CLOS</text>
</g>

<!-- Plan 2 -->
<g transform="translate(530 310) scale(.33333)">
<path d="M62 160V68H325V362H215V375H105V355M62 265V335L72 345M72 165V265M62 160H215V235H190M210 68V128H245M185 128H210M222 280V350M245 128V280H325M245 190H320M300 190V270M225 280H325M165 210V240H110V210Z" fill="none" stroke="#676c74" stroke-width="4.500"/>
<g fill="none" stroke="#3c434c" stroke-width="1.500"><path d="M228 300H318M228 312H318M228 324H318M228 336H318M240 300V350M255 300V350M270 300V350M285 300V350M300 300V350"/><path d="M285 345h25" stroke="#9aa0a8"/></g>
<path d="M140 130Q170 115 185 128M250 145Q285 130 295 155M225 185Q225 165 245 160M135 285Q170 270 215 290M230 350Q215 310 230 290M315 345Q325 320 312 305M245 270Q225 240 245 210M105 200Q85 210 100 230" fill="none" stroke="#7a2234" stroke-width="2"/>
<path d="M68 128h5v5h-5zM182 70h5v5h-5zM238 70h5v5h-5zM312 113h5v5h-5zM112 150h5v5h-5zM112 165h5v5h-5zM185 125h5v5h-5zM240 140h5v5h-5zM240 158h5v5h-5zM190 175h5v5h-5zM225 205h5v5h-5zM285 180h5v5h-5zM315 210h5v5h-5zM315 315h5v5h-5zM70 295h5v5h-5zM155 362h5v5h-5zM210 310h5v5h-5zM180 283h5v5h-5zM225 285h5v5h-5zM80 225h5v5h-5zM160 205h5v5h-5z" fill="#a01fa5"/>
<g fill="none" stroke="#1c7a24" stroke-width="2"><rect x="112" y="210" width="50" height="28"/><rect x="253" y="225" width="27" height="50"/><circle cx="100" cy="174" r="7"/><circle cx="145" cy="180" r="7"/><circle cx="297" cy="262" r="8"/><circle cx="311" cy="217" r="7"/><path d="M132 210v-25"/></g>
<g fill="#0ae80a"><circle cx="105" cy="58" r="6"/><circle cx="125" cy="58" r="6"/><circle cx="146" cy="58" r="6"/><rect x="93" y="65" width="62" height="9"/><circle cx="255" cy="58" r="6"/><circle cx="276" cy="58" r="6"/><circle cx="297" cy="58" r="6"/><rect x="244" y="65" width="62" height="9"/><path d="M60 82L73 72H82V92H73ZM60 176L73 166H82V186H73ZM60 249L73 239H82V259H73ZM60 348L73 338H82V358H73Z"/></g>
<g fill="#ff0000"><circle cx="88" cy="362" r="7"/><path d="M77 378V368H100V378H95V373H82V378Z"/></g>
<text x="132" y="104" class="t" style="font-size:11px">BEDROOM</text><text x="132" y="113" class="t" style="font-size:9px">11'0"x10'0"</text><text x="264" y="108" class="t" style="font-size:11px">BEDROOM</text><text x="264" y="116" class="t" style="font-size:9px">11'0"x10'0"</text><text x="180" y="168" class="t" style="font-size:10px">WALK-IN</text><text x="180" y="178" class="t" style="font-size:10px">CLOSET</text><text x="180" y="188" class="t" style="font-size:9px">8x10</text><text x="130" y="192" class="t" style="font-size:10px">BATH</text><text x="130" y="202" class="t" style="font-size:9px">5x8</text><text x="140" y="315" class="t" style="font-size:11px">MASTER</text><text x="140" y="325" class="t" style="font-size:11px">BEDROOM</text><text x="140" y="334" class="t" style="font-size:9px">15'0"x14'0"</text><text x="240" y="175" class="t" style="font-size:10px">HALL</text><text x="278" y="205" class="t" style="font-size:10px">BATH</text><text x="240" y="312" class="t" style="font-size:9px">STAIR</text>
</g>

<!-- crosshair -->
<path d="M503 436.700H528.500M515.700 424V449.500" stroke="#c9cbce" stroke-width="1"/><rect x="514" y="435" width="3.400" height="3.400" fill="none" stroke="#c9cbce" stroke-width=".7"/>

<!-- viewcube -->
<circle cx="663" cy="268" r="21.500" fill="none" stroke="#484f58" stroke-width="5"/>
<rect x="654" y="257.500" width="21" height="21" fill="#b7b8b9"/><rect x="655.500" y="259" width="18" height="18" fill="#c4c4c4"/>
<text x="664.500" y="270" class="m" style="fill:#444;font-size:4.200px">평면도</text>
<text x="664" y="248" class="m" style="fill:#8a9099;font-size:5px">북</text><text x="642" y="270" class="m" style="fill:#8a9099;font-size:5px">서</text><text x="686" y="270" class="m" style="fill:#8a9099;font-size:5px">동</text><text x="664" y="293" class="m" style="fill:#8a9099;font-size:5px">남</text>
<rect x="653" y="301" width="20" height="7" rx="1.500" fill="#4b525c"/><text x="663" y="306.400" class="m" style="fill:#a8afb8;font-size:4px">WCS</text>

<!-- navbar -->
<rect x="682.500" y="318" width="12.500" height="84" rx="1" fill="#62676d"/>
<g fill="none" stroke="#7b8086" stroke-width="1"><circle cx="689" cy="329" r="3.500"/><path d="M686 343q0-3 3-3t3 3v3h-6z"/><path d="M686 354l6 6M692 354l-6 6"/><circle cx="688" cy="357" r="2"/><path d="M689 368v8M685 372h8"/><path d="M685 384h8v6h-8z"/><path d="M685 391h8"/></g>

<!-- toolbar 2 -->
<rect x="394" y="228" width="113" height="13" fill="#38414f"/>
<text x="398" y="236.300">개수: 20</text><use href="#warn" x="424" y="235"/><use href="#tic" x="437" y="234.500"/><use href="#tic" transform="translate(450 234.500) scale(-1 1)"/><use href="#back" x="462" y="234.500"/><use href="#gbl" x="474" y="234.500"/><rect x="484" y="231" width="6" height="6" fill="#dfe3e8"/><rect x="487" y="234" width="4" height="4" fill="#3d7ab8"/><use href="#chk" x="500" y="234.500"/>
<path d="M673 232h4" stroke="#ddd" stroke-width="1"/><rect x="681" y="230" width="3.500" height="3.500" fill="none" stroke="#ddd"/><path d="M689 230l3 3.500M692 230l-3 3.500" stroke="#eee"/>

<!-- panel 2 -->
<rect x="214" y="240" width="9" height="252" fill="#2a313c"/><rect x="223" y="240" width="127" height="252" fill="#3b4453"/>
<path d="M217 241.500l3.500 3.500M220.500 241.500l-3.500 3.500" stroke="#dfe3e8"/><path d="M217 250.500h4" stroke="#bbb" stroke-width="1.500"/><circle cx="219" cy="258" r="1.800" fill="#aab"/><circle cx="219" cy="258" r=".7" fill="#333"/>
<path d="M217 475h4M217 480l4 2" stroke="#8c95a2"/><rect x="216.500" y="486" width="5" height="6" fill="#e8eaee"/><rect x="219.500" y="486" width="2.500" height="2.500" fill="#3d8ad0"/>
<rect x="232" y="247" width="97" height="10" fill="#2b323e"/><text x="237" y="253.800" style="fill:#7c8591">검색</text><use href="#back" x="336.500" y="252"/>
<rect x="232" y="263" width="109" height="205" fill="#414b5a"/><rect x="232" y="263" width="109" height="10" fill="#3a4352"/><path d="M232 273h109" stroke="#2f3743"/>
<text x="248" y="269.800" class="b" style="font-size:5px">이름 ▲</text><text x="337.500" y="269.800" class="m b" style="font-size:5px">개수</text>
<rect x="232" y="452" width="109" height="9.500" fill="#252c37"/>
<rect x="232" y="461.500" width="109" height="6.500" fill="#414b5a"/>
<path d="M232 468h109M341 263v205M232 263v205" stroke="#2f3743" stroke-width=".6"/>
<path d="M235 334.300h3M235 362.500h3M235 381.300h3M235 409.500h3M235 437.500h3" stroke="#cfd3d8" stroke-width="1"/>
<path d="M245 338V344H249M245 366V372H249M245 385V391H249M245 394V400H249M245 413V419H249M245 422V429H249M245 441V447H249" stroke="#6f7886" stroke-width=".5" stroke-dasharray=".8 .8" fill="none"/>
<use href="#blk" x="243" y="278.500"/><use href="#blk" x="243" y="288"/><use href="#blk" x="243" y="297.300"/><use href="#blk" x="243" y="306.700"/><use href="#blk" x="243" y="316"/><use href="#blk" x="243" y="325.500"/><use href="#blk" x="243" y="334.800"/><use href="#blk" x="251" y="344.200"/><use href="#blk" x="243" y="353.600"/><use href="#blk" x="243" y="363"/><use href="#blk" x="251" y="372.400"/><use href="#blk" x="243" y="381.800"/><use href="#blk" x="251" y="391.200"/><use href="#blk" x="251" y="400.600"/><use href="#blk" x="243" y="410"/><use href="#blk" x="251" y="419.300"/><use href="#blk" x="251" y="428.700"/><use href="#blk" x="243" y="438"/><use href="#blk" x="251" y="447.500"/><use href="#blk" x="243" y="457"/>
<g>
<text x="248" y="280.200" class="w">Bathtub</text><text x="338" y="280.200" class="w e">2</text>
<text x="248" y="289.600" class="w">Door</text><text x="338" y="289.600" class="w e">10</text>
<text x="248" y="299" class="w">Door - Bifold</text><text x="338" y="299" class="w e">4</text>
<text x="248" y="308.400" class="w">Door - French</text><text x="338" y="308.400" class="w e">2</text>
<text x="248" y="317.800" class="w">Faucet - top</text><text x="338" y="317.800" class="w e">6</text>
<text x="248" y="327.200" class="w">Lighting fixture</text><text x="338" y="327.200" class="w e">28</text>
<text x="248" y="336.600" class="w">Ramps_Oven</text><text x="338" y="335.500" class="w e">···</text>
<text x="256" y="346" class="w">Plan</text><text x="338" y="346" class="w e">1</text>
<text x="248" y="355.400" class="w">Receptacle</text><use href="#warn" x="316" y="353.500"/><text x="338" y="355.400" class="w e">43</text>
<text x="248" y="364.800" class="w">Refrigerator</text><text x="338" y="363.700" class="w e">···</text>
<text x="256" y="374.200" class="w">Plan</text><text x="338" y="374.200" class="w e">1</text>
<text x="248" y="383.600" class="w">Sink</text><text x="338" y="382.500" class="w e">···</text>
<text x="256" y="393" class="w">Bathroom - Plan</text><text x="338" y="393" class="w e">3</text>
<text x="256" y="402.400" class="w">Kitchen - Plan</text><text x="338" y="402.400" class="w e">1</text>
<text x="248" y="411.800" class="w">Switch</text><text x="338" y="410.700" class="w e">···</text>
<text x="256" y="421.200" class="w">3 Pole</text><text x="338" y="421.200" class="w e">1</text>
<text x="256" y="430.600" class="w">Single</text><text x="338" y="430.600" class="w e">18</text>
<text x="248" y="440" class="w">Toilet</text><text x="338" y="438.900" class="w e">···</text>
<text x="256" y="449.400" class="w">Plan</text><text x="338" y="449.400" class="w e">4</text>
<text x="248" y="458.800" class="w">Window</text><use href="#warn" x="316" y="457"/><text x="338" y="458.800" class="w e">20</text>
</g>
<rect x="303.500" y="475.500" width="38" height="10.500" rx="1" fill="#3f4958" stroke="#5d6878" stroke-width=".8"/><text x="322.500" y="482.800" class="m b" style="font-size:5px">테이블 작성</text>

<!-- UCS -->
<path d="M212 498V518H232" fill="none" stroke="#aab0b7" stroke-width=".9"/><path d="M213.500 518H231.500" stroke="#70767e" stroke-width=".6"/>
<text x="215" y="497" class="m" style="font-size:6px;fill:#aab0b7">Y</text><text x="236.500" y="517.500" class="m" style="font-size:6px;fill:#aab0b7">X</text>

<!-- blue border 2 -->
<rect x="205" y="223.500" width="494" height="2.500" fill="#0a7be6"/><rect x="205" y="223.500" width="2.500" height="303" fill="#0a7be6"/><rect x="696.500" y="223.500" width="2.500" height="303" fill="#0a7be6"/><rect x="205" y="524" width="99" height="2.500" fill="#0a7be6"/><rect x="599" y="524" width="100" height="2.500" fill="#0a7be6"/>
<!-- cmd 2 -->
<rect x="304" y="517" width="23" height="9.500" fill="#2b333f"/><rect x="305" y="518" width="1.800" height="7" fill="#7c8490"/><path d="M310.500 520l3 3M313.500 520l-3 3" stroke="#dde"/><path d="M319.500 524l4-4" stroke="#dde" stroke-width="1.200"/>
<rect x="327" y="517" width="272" height="7" fill="#bfc1c2"/><rect x="327" y="524" width="272" height="2.500" fill="#8cc4ec"/><rect x="329" y="519" width="5" height="4" fill="#555"/><path d="M595.500 522l1.200-1.500 1.200 1.500z" fill="#555"/>
<text x="340" y="522.400" style="font-size:4.500px;fill:#6d6d6d;font-style:italic">명령 입력</text>

<!-- status 2 -->
<rect x="204" y="527" width="497" height="13" fill="#222933"/>
<path d="M207 538l4-9h17l-2 9Z" fill="#39424f"/><text x="218" y="535.500" class="m">모형</text><text x="240" y="535.500" class="m" style="font-size:5px">ISO A1</text><text x="259.500" y="536.500" class="m" style="font-size:8px;fill:#e8ebef">+</text><path d="M252 538l3-8M267 538l3-8" stroke="#4a5361" stroke-width=".6"/>
<rect x="474" y="529" width="12" height="8" fill="#39424f"/><text x="480" y="535" class="m" style="font-size:4.300px">모형</text>
<g fill="#3f86c8"><rect x="523" y="529" width="9" height="9"/><rect x="555" y="529" width="8.500" height="9"/><rect x="564.500" y="529" width="8.500" height="9"/><rect x="581" y="529" width="8.500" height="9"/></g>
<rect x="488.500" y="530.500" width="6" height="6" fill="#aeb4bc"/><path d="M498 531.500h7M498 533.500h7M498 535.500h7" stroke="#aeb4bc" stroke-width=".8"/><path d="M514 530v6.500h7" stroke="#c9ced5" fill="none"/><circle cx="527.500" cy="533.500" r="2.700" fill="none" stroke="#fff"/><path d="M539 536l3-3 3 3M542 533v-3" stroke="#7cbf7c" stroke-width=".8" fill="none"/><path d="M556.500 536.500l5-5" stroke="#fff"/><rect x="566" y="530.500" width="5.500" height="6" fill="none" stroke="#fff"/>
<path d="M585 530l3 6h-6z" fill="#fff"/><path d="M595 530l3 6h-6zM604 530l3 6h-6z" fill="none" stroke="#dfe3e8"/><text x="613" y="535.500" class="m" style="font-size:4.500px">1:1</text>
<circle cx="628" cy="533.500" r="2.300" fill="none" stroke="#dfe3e8" stroke-width="1.300"/><path d="M644 530v7.500M640.500 533.700h7.500" stroke="#dfe3e8" stroke-width="1.100"/><path d="M651 531h4v3h-4zM654 534h3v3h-3z" fill="#8c95a2"/><rect x="661" y="530.500" width="3" height="3" fill="#e8b830"/><rect x="664" y="533.500" width="3" height="3" fill="#4a90d8"/><rect x="661" y="533.500" width="3" height="3" fill="#60b060"/><rect x="671" y="530.500" width="6" height="6" fill="#dfe3e8"/><rect x="674" y="533.500" width="3" height="3" fill="#e09040"/>
<rect x="682" y="530.500" width="7" height="6" fill="none" stroke="#dfe3e8" stroke-width=".8"/><path d="M692 531h7M692 533.500h7M692 536h7" stroke="#e8eaee" stroke-width="1"/>
<g fill="#cfd3d8"><circle cx="508" cy="533.500" r=".6"/><circle cx="536" cy="533.500" r=".6"/><circle cx="551" cy="533.500" r=".6"/><circle cx="576" cy="533.500" r=".6"/><circle cx="620" cy="533.500" r=".6"/><circle cx="636" cy="533.500" r=".6"/></g>
</svg>
</body></html>
